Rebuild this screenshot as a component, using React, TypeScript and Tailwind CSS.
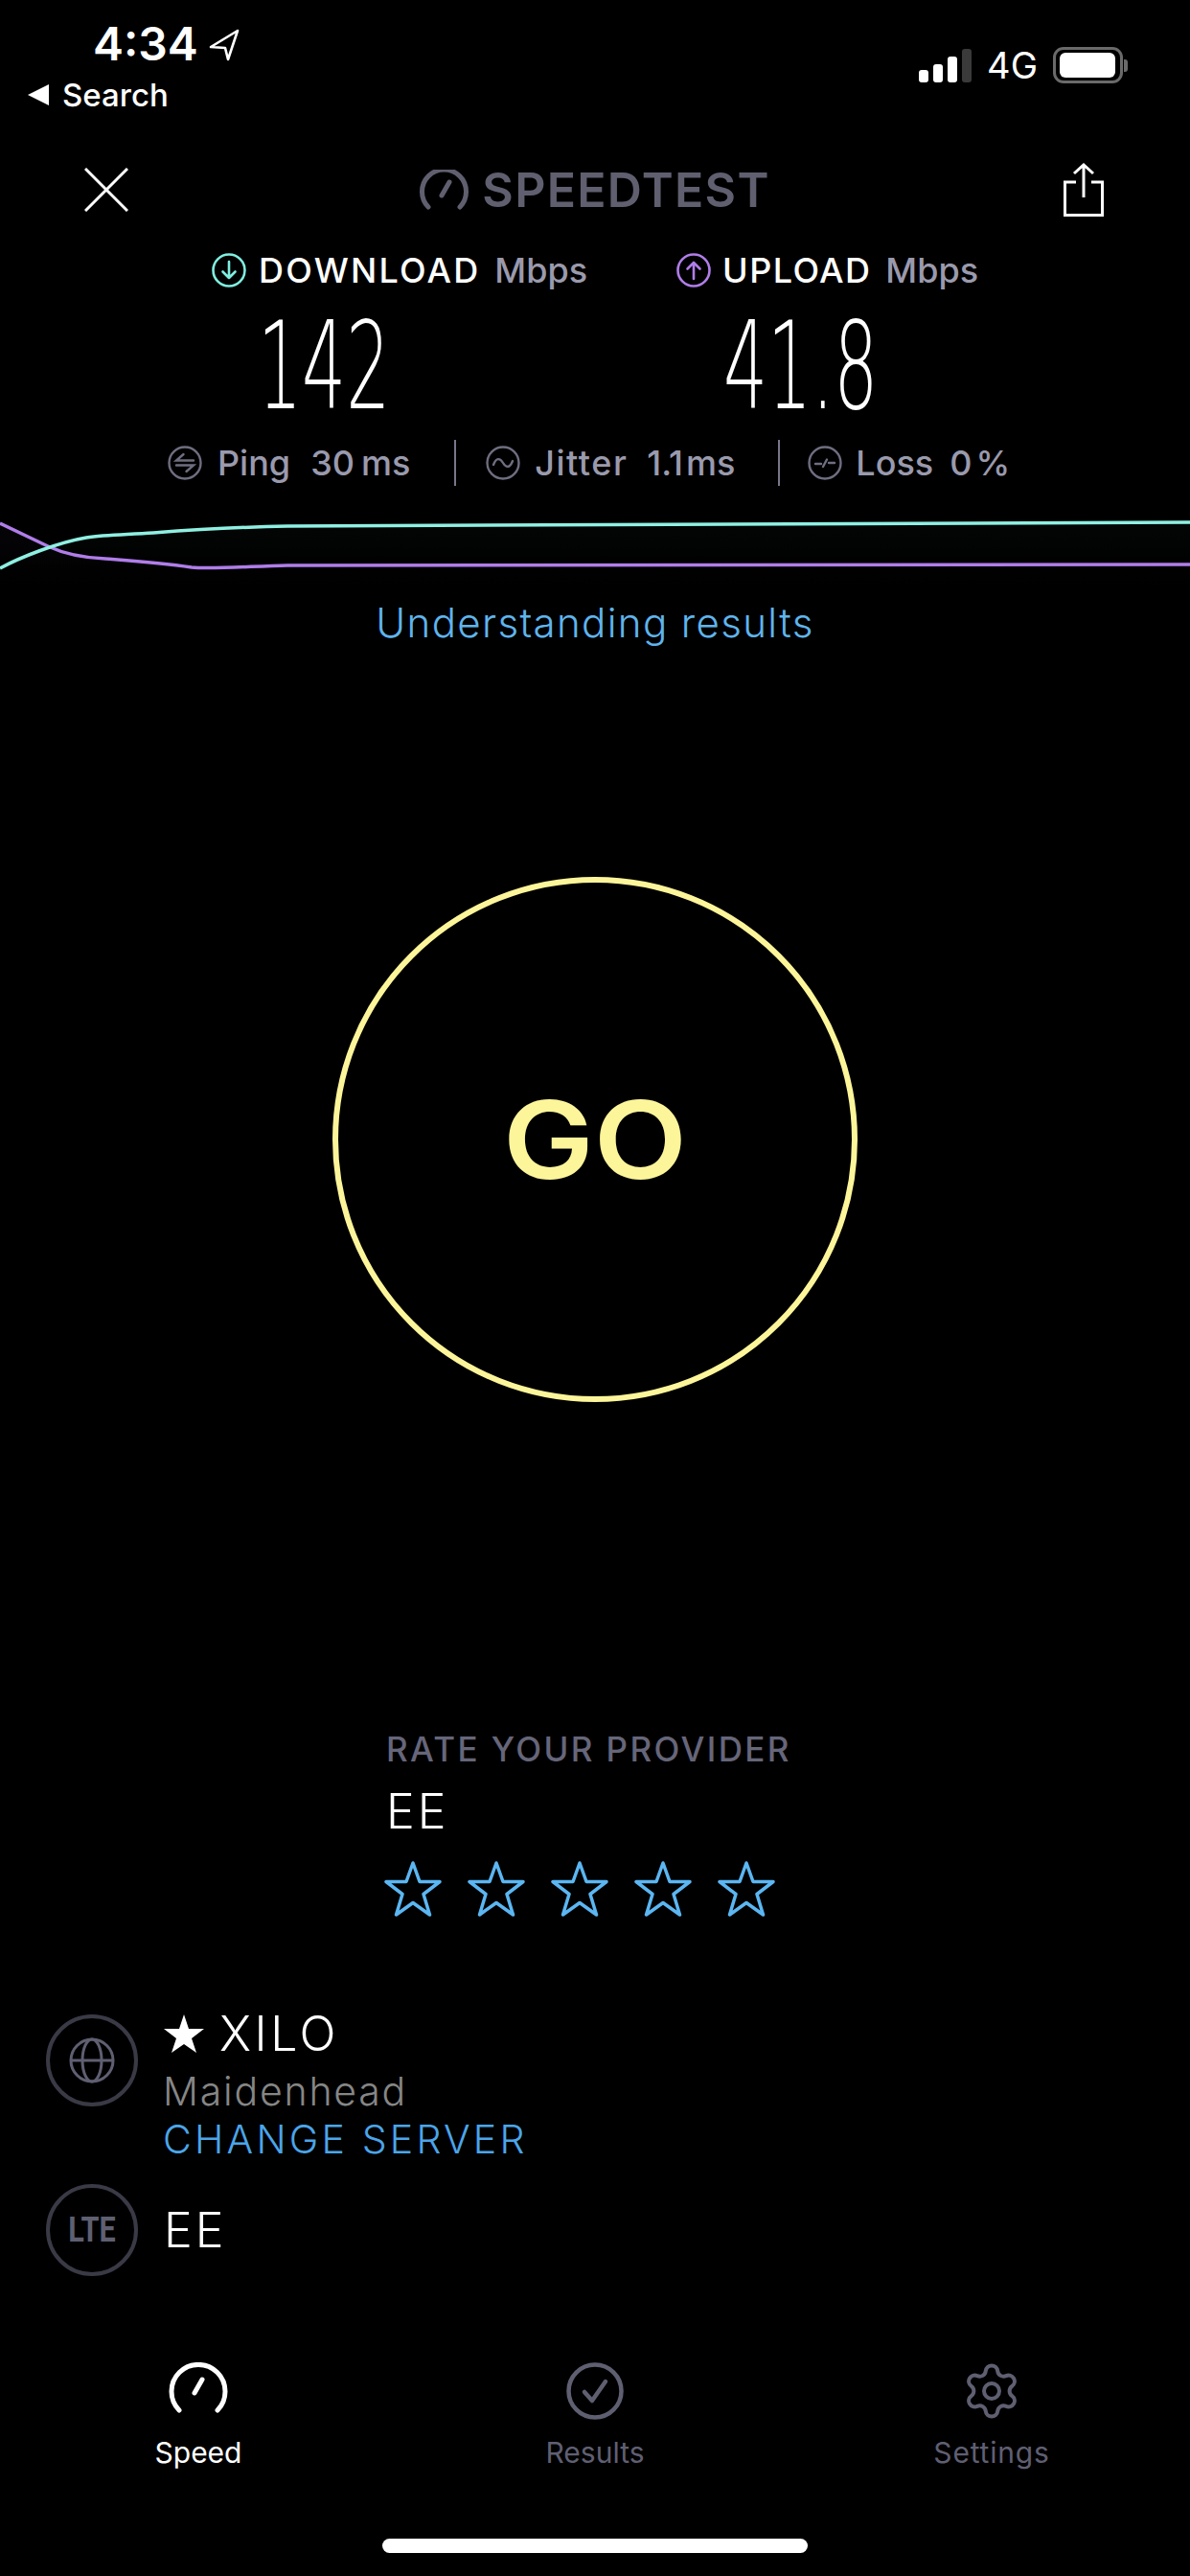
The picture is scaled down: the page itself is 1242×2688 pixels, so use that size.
import React from "react";
import { Settings } from "lucide-react";

const sans = "font-['Inter','Liberation_Sans',sans-serif]";

function Metric({ children }: { children: React.ReactNode }) {
  return <span className="text-[36px] leading-none font-medium text-[#9a9aad]">{children}</span>;
}

function Star() {
  return (
    <svg width="60" height="58" viewBox="0 0 60 58" fill="none" stroke="#5bb6f2" strokeWidth="3.5" strokeLinejoin="round">
      <path d="M30 2 L37 21.5 L58 21.5 L41 34.5 L47.5 56 L30 43.5 L12.5 56 L19 34.5 L2 21.5 L23 21.5 Z" />
    </svg>
  );
}

export default function App() {
  const cyan = "M0 593 C 20 582, 60 566, 90 561 C 110 558, 130 558, 160 556 C 200 553, 250 550, 300 549 C 500 547, 800 546, 1242 545";
  const purple = "M0 546 L50 570 C 65 577, 85 582, 110 583 C 135 585, 165 587, 200 592 C 220 594, 260 591, 300 590 L1242 589";
  return (
    <div className={`w-[1242px] h-[2688px] bg-black flex flex-col overflow-hidden ${sans}`}>
      {/* status bar */}
      <div className="h-[160px] flex justify-between">
        <div className="flex flex-col">
          <div className="h-[86px] pl-[97px] pt-[22px] flex items-start gap-[11px]">
            <span className="text-[48px] leading-[48px] font-semibold text-white">4:34</span>
            <svg width="32" height="34" viewBox="0 0 32 34" fill="none" stroke="#fff" strokeWidth="2.6" strokeLinejoin="round" className="mt-[8px]">
              <path d="M30 2 L2 19 L17 20 L20 32 Z" />
            </svg>
          </div>
          <div className="pl-[29px] flex items-center gap-[14px] h-[30px] mt-[-2px]">
            <svg width="22" height="22" viewBox="0 0 22 22" fill="#fff"><path d="M22 0 V22 L0 11 Z" /></svg>
            <span className="text-[33px] leading-none font-medium text-white">Search</span>
          </div>
        </div>
        <div className="flex items-center h-[38px] mt-[49px] pr-[65px]">
          <svg width="55" height="36" viewBox="0 0 55 36" fill="#fff">
            <rect x="0" y="23" width="10" height="13" rx="3" />
            <rect x="15" y="17" width="10" height="19" rx="3" />
            <rect x="30" y="9" width="10" height="27" rx="3" />
            <rect x="45" y="1" width="10" height="35" rx="3" fill="#3a3a3a" />
          </svg>
          <span className="ml-[16px] text-[38px] leading-none font-normal text-white">4G</span>
          <div className="ml-[16px] flex items-center">
            <div className="w-[73px] h-[38px] rounded-[11px] border-[3px] border-[#6a6a6a] pl-[4px] pr-[5px] py-[3px]">
              <div className="w-full h-full bg-white rounded-[6px]" />
            </div>
            <div className="w-[4px] h-[13px] ml-[1px] bg-[#6a6a6a] rounded-r-[3px]" />
          </div>
        </div>
      </div>

      {/* header */}
      <div className="h-[75px] flex items-center pl-[88px] pr-[90px] justify-between">
        <svg width="46" height="46" viewBox="0 0 46 46" stroke="#fff" strokeWidth="3" fill="none">
          <path d="M1 1 L45 45 M45 1 L1 45" />
        </svg>
        <div className="flex items-center gap-[14px] ml-[-2px]">
          <svg width="51" height="42" viewBox="0 0 51 42" fill="none" stroke="#5f5f70" strokeWidth="5" strokeLinecap="round">
            <path d="M9 39 A 23 23 0 1 1 42 39" />
            <path d="M23 27 L31 13" />
          </svg>
          <span className="text-[50px] leading-none font-semibold text-[#5f5f70] tracking-[1.3px]">SPEEDTEST</span>
        </div>
        <svg width="42" height="56" viewBox="0 0 42 56" fill="none" stroke="#fff" strokeWidth="3">
          <path d="M21 36 V2 M11 11 L21 2 L31 11" />
          <path d="M13 20 H1.5 V54.5 H40.5 V20 H29" />
        </svg>
      </div>

      {/* labels */}
      <div className="h-[44px] mt-[25px] flex items-center pl-[221px]">
        <svg width="36" height="36" viewBox="0 0 36 36" fill="none" stroke="#7feee0" strokeWidth="2.6" strokeLinecap="round" strokeLinejoin="round">
          <circle cx="18" cy="18" r="16.5" />
          <path d="M18 9 V26 M11.5 19.5 L18 26 L24.5 19.5" />
        </svg>
        <span className="ml-[13px] text-[36px] leading-none font-medium text-white tracking-[2.2px]">DOWNLOAD</span>
        <span className="ml-[15px] text-[36px] leading-none font-medium text-[#9a9aad]">Mbps</span>
        <svg width="36" height="36" viewBox="0 0 36 36" fill="none" stroke="#b07de9" strokeWidth="2.6" strokeLinecap="round" strokeLinejoin="round" className="ml-[93px]">
          <circle cx="18" cy="18" r="16.5" />
          <path d="M18 27 V10 M11.5 16.5 L18 10 L24.5 16.5" />
        </svg>
        <span className="ml-[12px] text-[36px] leading-none font-medium text-white tracking-[1.4px]">UPLOAD</span>
        <span className="ml-[15px] text-[36px] leading-none font-medium text-[#9a9aad]">Mbps</span>
      </div>

      {/* values */}
      <div className="h-[110px] mt-[24px] flex items-center text-white font-['DejaVu_Sans',sans-serif] font-extralight text-[126px] leading-none">
        <div className="w-[755px] pl-[269px]">
          <span className="inline-block origin-left scale-x-[0.575]">142</span>
        </div>
        <div>
          <span className="inline-block origin-left scale-x-[0.575]">41.8</span>
        </div>
      </div>

      {/* ping row */}
      <div className="h-[56px] mt-[17px] flex items-center pl-[175px]">
        <svg width="36" height="36" viewBox="0 0 36 36" fill="none" stroke="#6e6e80" strokeWidth="2.4" strokeLinecap="round">
          <circle cx="18" cy="18" r="16.5" />
          <path d="M27 15.5 H9 L16.5 9 M9 20.5 H27 L19.5 27" />
        </svg>
        <span className="ml-[16px]"><Metric>Ping</Metric></span>
        <span className="ml-[21px]"><Metric>30</Metric></span>
        <span className="ml-[7px]"><Metric>ms</Metric></span>
        <div className="ml-[46px] w-[2px] h-[48px] bg-[#77778a]" />
        <svg width="36" height="36" viewBox="0 0 36 36" fill="none" stroke="#6e6e80" strokeWidth="2.4" strokeLinecap="round" className="ml-[31px]">
          <circle cx="18" cy="18" r="16.5" />
          <path d="M8 20 C 11 12, 15 13, 18 18 C 21 23, 25 24, 28 16" />
        </svg>
        <span className="ml-[15px] tracking-[1.5px]"><Metric>Jitter</Metric></span>
        <span className="ml-[20px]"><Metric>1.1</Metric></span>
        <span className="ml-[3px]"><Metric>ms</Metric></span>
        <div className="ml-[45px] w-[2px] h-[48px] bg-[#77778a]" />
        <svg width="36" height="36" viewBox="0 0 36 36" fill="none" stroke="#6e6e80" strokeWidth="2.4" strokeLinecap="round" className="ml-[29px]">
          <circle cx="18" cy="18" r="16.5" />
          <path d="M8 19 H14 M16 22 L20 14.5 M22 18 H28" />
        </svg>
        <span className="ml-[14px]"><Metric>Loss</Metric></span>
        <span className="ml-[17px]"><Metric>0</Metric></span>
        <span className="ml-[4px]"><Metric>%</Metric></span>
      </div>

      {/* chart */}
      <svg width="1242" height="100" viewBox="0 530 1242 100" fill="none" className="mt-[19px] block">
        <defs>
          <linearGradient id="cg" x1="0" y1="0" x2="0" y2="1">
            <stop offset="0" stopColor="#8ff0e2" stopOpacity="0.025" />
            <stop offset="1" stopColor="#8ff0e2" stopOpacity="0" />
          </linearGradient>
          <linearGradient id="pg" x1="0" y1="0" x2="0" y2="1">
            <stop offset="0" stopColor="#b07de9" stopOpacity="0.03" />
            <stop offset="1" stopColor="#b07de9" stopOpacity="0" />
          </linearGradient>
        </defs>
        <path d={`${cyan} V 590 H 0 Z`} fill="url(#cg)" />
        <path d={`${purple} V 615 H 0 Z`} fill="url(#pg)" />
        <path d={purple} stroke="#b07de9" strokeWidth="3.5" />
        <path d={cyan} stroke="#8ff0e2" strokeWidth="3.5" />
      </svg>

      <div className="h-[50px] mt-[-5px] flex items-center justify-center text-[42px] leading-none font-light text-[#5fb4ec] tracking-[1.35px]">
        Understanding results
      </div>

      {/* GO */}
      <div className="mt-[240px] flex justify-center">
        <div className="w-[548px] h-[548px] rounded-full border-[6px] border-[#fdf59a] flex items-center justify-center text-[112px] leading-none font-semibold text-[#fdf59a]">
          <span className="inline-block scale-x-[1.13]">GO</span>
        </div>
      </div>

      {/* rate */}
      <div className="mt-[345px] pl-[403px] flex flex-col">
        <div className="h-[35px] flex items-center text-[35px] leading-none font-medium text-[#66667a] tracking-[2.4px]">RATE YOUR PROVIDER</div>
        <div className="h-[50px] mt-[22px] flex items-center text-[50px] leading-none font-light text-white tracking-[3px]">EE</div>
        <div className="flex gap-[27px] mt-[27px] ml-[-2px]">
          <Star /><Star /><Star /><Star /><Star />
        </div>
      </div>

      {/* server */}
      <div className="mt-[97px] pl-[48px] flex gap-[26px]">
        <div className="w-[96px] h-[96px] mt-[5px] rounded-full border-[4px] border-[#3a3a46] flex items-center justify-center shrink-0">
          <svg width="48" height="48" viewBox="0 0 48 48" fill="none" stroke="#5f5f72" strokeWidth="3">
            <circle cx="24" cy="24" r="22" />
            <ellipse cx="24" cy="24" rx="10" ry="22" />
            <path d="M2 24 H46" />
          </svg>
        </div>
        <div className="flex flex-col">
          <div className="h-[50px] flex items-center">
            <svg width="42" height="40" viewBox="0 0 42 40" fill="#fff" className="ml-[1px]">
              <path d="M21 0 L26 15 L42 15 L29 25 L34 40 L21 31 L8 40 L13 25 L0 15 L16 15 Z" />
            </svg>
            <span className="ml-[16px] text-[50px] leading-none font-light text-white tracking-[3.5px]">XILO</span>
          </div>
          <div className="h-[50px] mt-[10px] flex items-center text-[41px] leading-none font-light text-[#868686] tracking-[1.8px]">Maidenhead</div>
          <div className="h-[50px] flex items-center text-[41px] leading-none font-light text-[#4ba5ea] tracking-[3.2px]">CHANGE SERVER</div>
        </div>
      </div>

      <div className="mt-[22px] pl-[48px] flex items-center gap-[27px]">
        <div className="w-[96px] h-[96px] rounded-full border-[4px] border-[#3a3a46] flex items-center justify-center shrink-0">
          <span className="text-[36px] leading-none font-bold text-[#5f5f72] font-['Roboto',sans-serif] inline-block scale-x-[0.85]">LTE</span>
        </div>
        <span className="text-[50px] leading-none font-light text-white tracking-[3px]">EE</span>
      </div>

      {/* tabs */}
      <div className="mt-[90px] grid grid-cols-3">
        <div className="flex flex-col items-center">
          <svg width="62" height="60" viewBox="0 0 62 60" fill="none" stroke="#fff" strokeWidth="5" strokeLinecap="round">
            <path d="M11 50 A 28 28 0 1 1 51 50" />
            <path d="M27 32 L35 18" />
          </svg>
          <span className="mt-[16px] text-[30px] leading-[36px] font-normal text-white">Speed</span>
        </div>
        <div className="flex flex-col items-center">
          <svg width="60" height="60" viewBox="0 0 60 60" fill="none" stroke="#5f5f72" strokeWidth="4.5" strokeLinecap="round" strokeLinejoin="round">
            <circle cx="30" cy="30" r="27.5" />
            <path d="M19 31 L27 40 L41 20" />
          </svg>
          <span className="mt-[16px] text-[30px] leading-[36px] font-normal text-[#5f5f72]">Results</span>
        </div>
        <div className="flex flex-col items-center">
          <Settings size={64} strokeWidth={1.5} color="#5f5f72" className="my-[-2px]" />
          <span className="mt-[16px] text-[30px] leading-[36px] font-normal text-[#5f5f72] tracking-[0.8px]">Settings</span>
        </div>
      </div>

      {/* home indicator */}
      <div className="mt-[72px] flex justify-center">
        <div className="w-[444px] h-[15px] rounded-full bg-white" />
      </div>
    </div>
  );
}
